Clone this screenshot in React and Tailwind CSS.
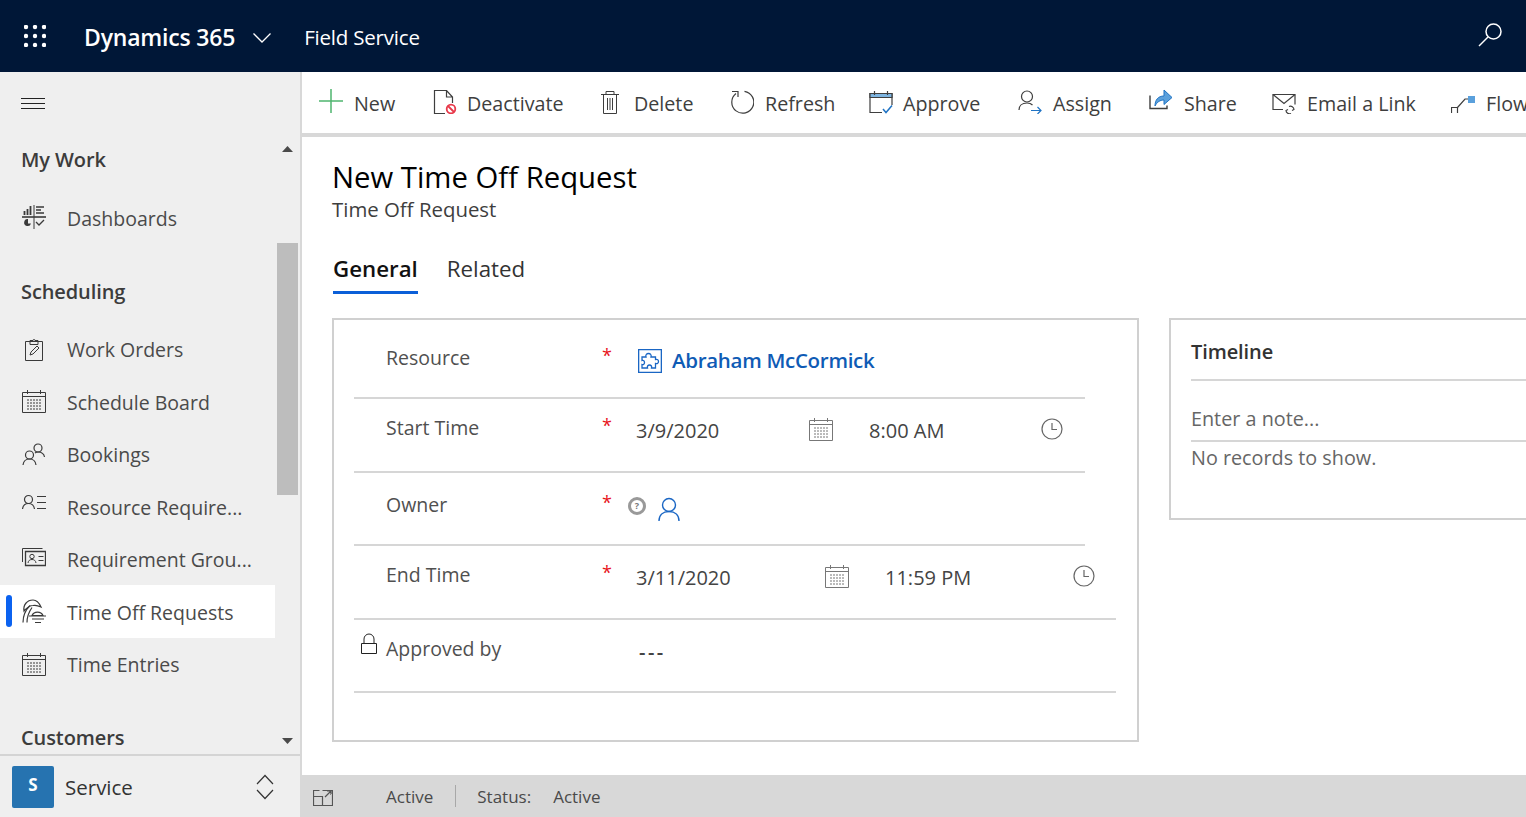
import React from "react";

const Ic = ({ w = 24, h = 24, className = "", children, sw = 1 }) => (
  <svg width={w} height={h} viewBox={`0 0 ${w} ${h}`} fill="none" stroke="currentColor" strokeWidth={sw} className={`shrink-0 ${className}`}>
    {children}
  </svg>
);

// calendar used in the nav and in the date fields
const Calendar = ({ className = "" }) => (
  <Ic className={className}>
    <path d="M.5 3.5h23v20H.5z" />
    <path d="M.5 7.5h23M5.5 1v4M18.5 1v4" />
    <path d="M5 11h14M5 14h14M5 17h14M5 20h14" strokeDasharray="2 1" />
  </Ic>
);

const Clock = ({ className = "" }) => (
  <Ic w={22} h={22} className={className} sw={1.2}>
    <circle cx="11" cy="11" r="10" />
    <path d="M11 5v6.5h5" />
  </Ic>
);

const navIcons = {
  dash: (
    <Ic>
      <path d="M0 12h24" strokeWidth="1.6" />
      <path d="M12 0v24" />
      <path d="M2.500 10V6M5.500 10V4M8.500 10V1" strokeWidth="1.8" />
      <path d="M14 2h8M14 5h5M14 8h8" strokeWidth="1.3" />
      <path d="M6 14a3.500 3.500 0 1 0 3 4.500H6z" fill="currentColor" stroke="none" />
      <path d="M14 17l3 3 5-5" strokeWidth="1.3" />
    </Ic>
  ),
  orders: (
    <Ic>
      <path d="M3.500 4.500h17v19h-17z" />
      <path d="M8 7.500V3.500h3a1 1 0 0 1 2 0h3v4z" />
      <path d="M8 18l1-3 6-6 2 2-6 6z" />
    </Ic>
  ),
  bookings: (
    <Ic sw={1.2}>
      <circle cx="16" cy="6" r="4" />
      <circle cx="7.500" cy="13" r="4" />
      <path d="M1 23c.5-4 3-6 6.500-6s6 2 6.500 6M13 11c1-.8 2-1 3-1 3.500 0 6 2 6.500 5" />
    </Ic>
  ),
  requirement: (
    <Ic sw={1.2}>
      <circle cx="6.500" cy="5.500" r="4" />
      <path d="M.5 15c.5-3.500 2.500-5.500 6-5.500s5.500 2 6 5.500M15 2.500h9M15 8.500h9M15 14.500h9" />
    </Ic>
  ),
  group: (
    <Ic>
      <path d="M.5 15V1.500h20" />
      <path d="M3.500 4.500h20v14h-20z" strokeWidth="1.3" />
      <circle cx="10" cy="9.500" r="2.200" />
      <path d="M6 16c.3-2.500 2-3.500 4-3.500s3.700 1 4 3.500M16.500 9.500h5M16.500 13.500h5" />
    </Ic>
  ),
  timeoff: (
    <Ic sw={1.2}>
      <path d="M1 23.500c0-6 2-12 7-17M5 23.500c0-5 1.500-10 5-15" />
      <path d="M2 12C1 6 5 1 11 1c3 0 6 2.500 8 7-3-1.500-6-2-8-1.500C7.500 6.500 4.500 9 2 12z" />
      <path d="M10 16.500a6 5.500 0 0 1 11 0zM7 17h17M10 20h12M13 23.500h6" />
    </Ic>
  ),
};

const nav = [
  { title: "My Work", items: [{ label: "Dashboards", icon: navIcons.dash }] },
  {
    title: "Scheduling",
    items: [
      { label: "Work Orders", icon: navIcons.orders },
      { label: "Schedule Board", icon: <Calendar /> },
      { label: "Bookings", icon: navIcons.bookings },
      { label: "Resource Require...", icon: navIcons.requirement },
      { label: "Requirement Grou...", icon: navIcons.group },
      { label: "Time Off Requests", icon: navIcons.timeoff, active: true },
      { label: "Time Entries", icon: <Calendar /> },
    ],
  },
  { title: "Customers", items: [] },
];

const commands = [
  {
    label: "New",
    width: "w-[114px]",
    gap: "gap-[11px]",
    icon: (
      <Ic className="text-[#4fb56f]" sw={1.5}>
        <path d="M12 0v24M0 12h24" />
      </Ic>
    ),
  },
  {
    label: "Deactivate",
    width: "w-[167px]",
    gap: "gap-[10px]",
    icon: (
      <Ic className="mt-[2px]">
        <path d="M12 23.500H1.500V.5h12l6 6.500v6M13.500.5v6.500h6" strokeWidth="1.2" />
        <circle cx="18" cy="19" r="4.300" stroke="#e8394a" strokeWidth="1.800" />
        <path d="M15 16l6 6" stroke="#e8394a" strokeWidth="1.800" />
      </Ic>
    ),
  },
  {
    label: "Delete",
    width: "w-[130px]",
    gap: "gap-[14px]",
    icon: (
      <Ic w={20} className="mt-[2px]">
        <path d="M1 4.500h18M6 4.500v-3h8v3M3.500 4.500v19h13v-19M7.500 8v12M10 8v12M12.500 8v12" />
      </Ic>
    ),
  },
  {
    label: "Refresh",
    width: "w-[139px]",
    gap: "gap-[11px]",
    icon: (
      <Ic className="mt-[2px]" sw={1.2}>
        <path d="M14.500 1.300A11 11 0 1 1 6 3.500" />
        <path d="M2 1.500h6v5.500" />
      </Ic>
    ),
  },
  {
    label: "Approve",
    width: "w-[149px]",
    gap: "gap-[10px]",
    icon: (
      <Ic className="mt-[2px]" sw={1.2}>
        <path d="M13 22.500H1V3.500h22V15" />
        <path d="M1 3.500h22v4H1z" fill="#7db4e0" />
        <path d="M5.500 1v4M18.500 1v4" />
        <path d="M14 19l3 3.500 6-7" stroke="#1f73c4" strokeWidth="1.500" />
      </Ic>
    ),
  },
  {
    label: "Assign",
    width: "w-[131px]",
    gap: "gap-[11px]",
    icon: (
      <Ic className="mt-[2px]" sw={1.2}>
        <circle cx="9" cy="6.500" r="5.500" />
        <path d="M1 20c0-4 3-7 8-7 2 0 4 .5 5.500 2" />
        <path d="M13 20.500h10M19.500 17l3.500 3.500-3.500 3.500" stroke="#1f73c4" />
      </Ic>
    ),
  },
  {
    label: "Share",
    width: "w-[123px]",
    gap: "gap-[11px]",
    icon: (
      <Ic>
        <path d="M1 6.500V19.500h17v-3" strokeWidth="1.400" />
        <path d="M6 17c0-6 3-10 9-10V1l8 7.500-8 7V11c-4 0-7 2-9 6z" fill="#5aa0dc" stroke="#1f73c4" />
      </Ic>
    ),
  },
  {
    label: "Email a Link",
    width: "w-[179px]",
    gap: "gap-[11px]",
    icon: (
      <Ic className="mt-[2px]">
        <path d="M11 19.500H1V4.500h22v10" strokeWidth="1.200" />
        <path d="M1 4.500l11 9 11-9" strokeWidth="1.200" />
        <path d="M17 16.500a3.500 3.500 0 0 1 5 3l-2 1M19 23.500a3.500 3.500 0 0 1-5-3l2-1" strokeWidth="1.200" />
      </Ic>
    ),
  },
  {
    label: "Flow",
    width: "w-[100px]",
    gap: "gap-[11px]",
    icon: (
      <Ic>
        <path d="M.5 18.500h6v6h-6zM6.500 18.500L14 10h3" strokeWidth="1.200" />
        <path d="M17 7h7v7h-7z" fill="#5aa0dc" stroke="none" />
      </Ic>
    ),
  },
];

const Row = ({ label, h, wide, pt, starPt, star = true, lock, children }) => (
  <div className={`flex ${h} ${wide ? "w-[762px]" : "w-[731px]"} border-b-2 border-[#d6d6d6]`}>
    <div className={`relative w-[248px] shrink-0 pl-[32px] ${pt} text-[19.500px] leading-[28px] text-[#505050]`}>
      {lock && (
        <Ic w={18} h={22} className="absolute left-[6px] top-[13px] text-[#222]">
          <path d="M1.500 10.500h15v10h-15zM4 10.500V6a5 5 0 0 1 10 0v4.500" />
        </Ic>
      )}
      {label}
    </div>
    <div className={`w-[34px] shrink-0 ${starPt} text-[18px] leading-none text-[#e8141c]`}>{star ? "*" : ""}</div>
    {children}
  </div>
);

const DateValue = ({ date, dateWidth, time, timeWidth }) => (
  <div className="flex items-start pt-[18px] text-[20px] leading-[28px] text-[#444]">
    <span className={dateWidth}>{date}</span>
    <Calendar className="text-[#777]" />
    <span className={`ml-[36px] ${timeWidth}`}>{time}</span>
    <Clock className="mt-[1px] text-[#666]" />
  </div>
);

export default function App() {
  return (
    <div className="flex h-[817px] w-[1526px] flex-col overflow-hidden bg-white font-['Open_Sans',sans-serif]">
      <header className="flex h-[72px] shrink-0 items-center bg-[#001737] pl-[24px] pr-[24px] text-white">
        <svg width="22" height="22" viewBox="0 0 22 22" fill="white" className="shrink-0">
          {[2, 11, 20].map((y) => [2, 11, 20].map((x) => <circle key={`${x}${y}`} cx={x} cy={y} r="2.200" />))}
        </svg>
        <span className="ml-[38px] pt-[2px] text-[23px] font-semibold tracking-[-0.2px]">Dynamics 365</span>
        <Ic w={18} h={10} className="ml-[18px] mt-[3px]" sw={1.3}>
          <path d="M.5.5L9 9l8.500-8.500" />
        </Ic>
        <span className="ml-[33px] pt-[2px] text-[20.500px] tracking-[-0.2px]">Field Service</span>
        <Ic className="ml-auto -mt-[2px]" sw={1.500}>
          <circle cx="15.500" cy="8.500" r="7.500" />
          <path d="M10 14L1 23" />
        </Ic>
      </header>

      <div className="flex min-h-0 flex-1">
        <aside className="flex w-[302px] shrink-0 flex-col border-r-2 border-[#d8d8d8] bg-[#efefef]">
          <div className="flex h-[63px] shrink-0 items-center pl-[21px]">
            <svg width="24" height="11" viewBox="0 0 24 11" stroke="#222" strokeWidth="1">
              <path d="M0 .5h24M0 5.500h24M0 10.500h24" />
            </svg>
          </div>
          <div className="flex min-h-0 flex-1">
            <nav className="w-[275px] shrink-0 overflow-hidden">
              {nav.map((section) => (
                <div key={section.title} className="mb-[23px]">
                  <h2 className="flex h-[50px] items-center pl-[21px] text-[20px] font-semibold tracking-[-0.1px] text-[#3c3c3c]">
                    {section.title}
                  </h2>
                  <ul className="mt-[6px]">
                    {section.items.map((item) => (
                      <li
                        key={item.label}
                        className={`relative flex h-[52.500px] items-center pl-[22px] text-[#4a4a4a] ${item.active ? "bg-white" : ""}`}
                      >
                        {item.active && <span className="absolute left-[6px] top-[10px] h-[32px] w-[6px] rounded-full bg-[#0b62f0]" />}
                        <span className="text-[#3a3a3a]">{item.icon}</span>
                        <span className="ml-[21px] whitespace-nowrap pt-[2px] text-[19.500px]">{item.label}</span>
                      </li>
                    ))}
                  </ul>
                </div>
              ))}
            </nav>
            <div className="flex w-[25px] shrink-0 flex-col pl-[2px] pr-[2px]">
              <svg width="21" height="8" viewBox="0 0 21 8" fill="#4a4a4a" className="mt-[10px] shrink-0">
                <path d="M5 7l5.500-6L16 7z" />
              </svg>
              <div className="mt-[90px] h-[252px] shrink-0 bg-[#bdbdbd]" />
              <svg width="21" height="8" viewBox="0 0 21 8" fill="#4a4a4a" className="mt-auto mb-[9px] shrink-0">
                <path d="M5 1l5.500 6L16 1z" />
              </svg>
            </div>
          </div>
          <div className="flex h-[63px] shrink-0 items-center border-t-2 border-[#d4d4d4] pl-[12px] pr-[26px]">
            <span className="flex h-[42px] w-[42px] items-center justify-center rounded-[2px] bg-[#2673b0] pb-[4px] text-[17px] font-bold text-white">S</span>
            <span className="ml-[11px] pt-[2px] text-[20.500px] text-[#333]">Service</span>
            <Ic w={18} h={26} className="ml-auto text-[#333]" sw={1.2}>
              <path d="M1 10L9 1.500l8 8.500M1 16l8 8.500 8-8.500" />
            </Ic>
          </div>
        </aside>

        <main className="flex min-w-0 flex-1 flex-col">
          <div className="flex h-[65px] shrink-0 items-center overflow-hidden border-b-4 border-[#d8d8d8] pb-[2px] pl-[17px]">
            {commands.map((c) => (
              <div key={c.label} className={`flex ${c.width} ${c.gap} shrink-0 items-center text-[#3e3e3e]`}>
                {c.icon}
                <span className="mt-[4px] whitespace-nowrap text-[19.700px]">{c.label}</span>
              </div>
            ))}
          </div>

          <div className="min-h-0 flex-1 overflow-hidden pl-[30px] pt-[22px]">
            <h1 className="text-[29.300px] leading-[36px] text-black">New Time Off Request</h1>
            <p className="-mt-[1px] text-[20.400px] leading-[30px] text-[#3e3e3e]">Time Off Request</p>

            <div className="mt-[18px] ml-[1px] flex h-[52px] gap-[29px] pt-[10px] text-[22.300px]">
              <span className="border-b-[3px] border-[#0b5fd8] font-semibold text-[#111]">General</span>
              <span className="text-[#333]">Related</span>
            </div>

            <div className="mt-[24px] flex gap-[30px]">
              <section className="h-[424px] w-[807px] shrink-0 border-2 border-[#d0d0d0] pl-[20px]">
                <Row label="Resource" h="h-[79px]" pt="pt-[24px]" starPt="pt-[26px]">
                  <div className="flex items-start gap-[10px] pl-[2px] pt-[29px]">
                    <Ic className="text-[#1a66c4]" sw={1.3}>
                      <path d="M.5.5h23v23H.5z" strokeWidth="1.600" />
                      <path d="M4 8h4c-.7-2.500.8-3.500 2.500-3.500S13.700 5.500 13 8h4.500v2.500c2-.5 3 .5 3 2s-1 2.500-3 2V19h-4c.5-2-.5-3-2-3s-2.500 1-2 3H4v-3.500c1.500.5 2.500-.5 2.500-2S5.500 11 4 11.500z" />
                    </Ic>
                    <span className="-mt-[4px] text-[20.500px] font-semibold tracking-[-0.3px] text-[#0f5bb5]">Abraham McCormick</span>
                  </div>
                </Row>
                <Row label="Start Time" h="h-[74px]" pt="pt-[15px]" starPt="pt-[17px]">
                  <DateValue date="3/9/2020" dateWidth="w-[173px]" time="8:00 AM" timeWidth="w-[172px]" />
                </Row>
                <Row label="Owner" h="h-[73px]" pt="pt-[18px]" starPt="pt-[20px]">
                  <div className="flex items-start gap-[11px] pt-[24px]">
                    <span className="-ml-[8px] flex h-[18px] w-[18px] items-center justify-center rounded-full border-[3px] border-[#999] text-[9px] font-bold text-[#777]">?</span>
                    <Ic className="text-[#1a66c4]" sw={1.4}>
                      <circle cx="12" cy="8" r="6.500" />
                      <path d="M2 24c0-6 4-9.500 10-9.500s10 3.500 10 9.500" />
                    </Ic>
                  </div>
                </Row>
                <Row label="End Time" h="h-[74px]" wide pt="pt-[15px]" starPt="pt-[17px]">
                  <DateValue date="3/11/2020" dateWidth="w-[189px]" time="11:59 PM" timeWidth="w-[188px]" />
                </Row>
                <Row label="Approved by" h="h-[73px]" wide star={false} lock pt="pt-[15px]">
                  <span className="pl-[3px] pt-[18px] text-[20px] font-semibold leading-[28px] tracking-[2.500px] text-[#444]">---</span>
                </Row>
              </section>

              <section className="h-[202px] w-[420px] shrink-0 border-2 border-r-0 border-[#d0d0d0] pl-[20px] text-[19.800px]">
                <div className="flex h-[61px] items-center border-b-2 border-[#d6d6d6] pt-[4px] text-[20px] font-semibold tracking-[-0.1px] text-[#333]">Timeline</div>
                <div className="flex h-[61px] items-center border-b-2 border-[#d6d6d6] pt-[16px] text-[#666]">Enter a note...</div>
                <p className="pt-[1px] text-[#666]">No records to show.</p>
              </section>
            </div>
          </div>

          <footer className="flex h-[42px] shrink-0 items-center bg-[#d8d8d8] pl-[11px] text-[17px] text-[#4a4a4a]">
            <Ic w={20} h={18} className="mt-[3px] text-[#555]" sw={1.2}>
              <path d="M.5 7.500h9v9h-9zM9.500 16.500h10v-15h-10M.5 7.500V1.500h6M12 8l6-6M14 2h4v4" />
            </Ic>
            <span className="ml-[53px] pt-[2px]">Active</span>
            <span className="ml-[22px] h-[22px] w-px bg-[#a8a8a8]" />
            <span className="ml-[21px] pt-[2px]">Status:</span>
            <span className="ml-[22px] pt-[2px]">Active</span>
          </footer>
        </main>
      </div>
    </div>
  );
}
